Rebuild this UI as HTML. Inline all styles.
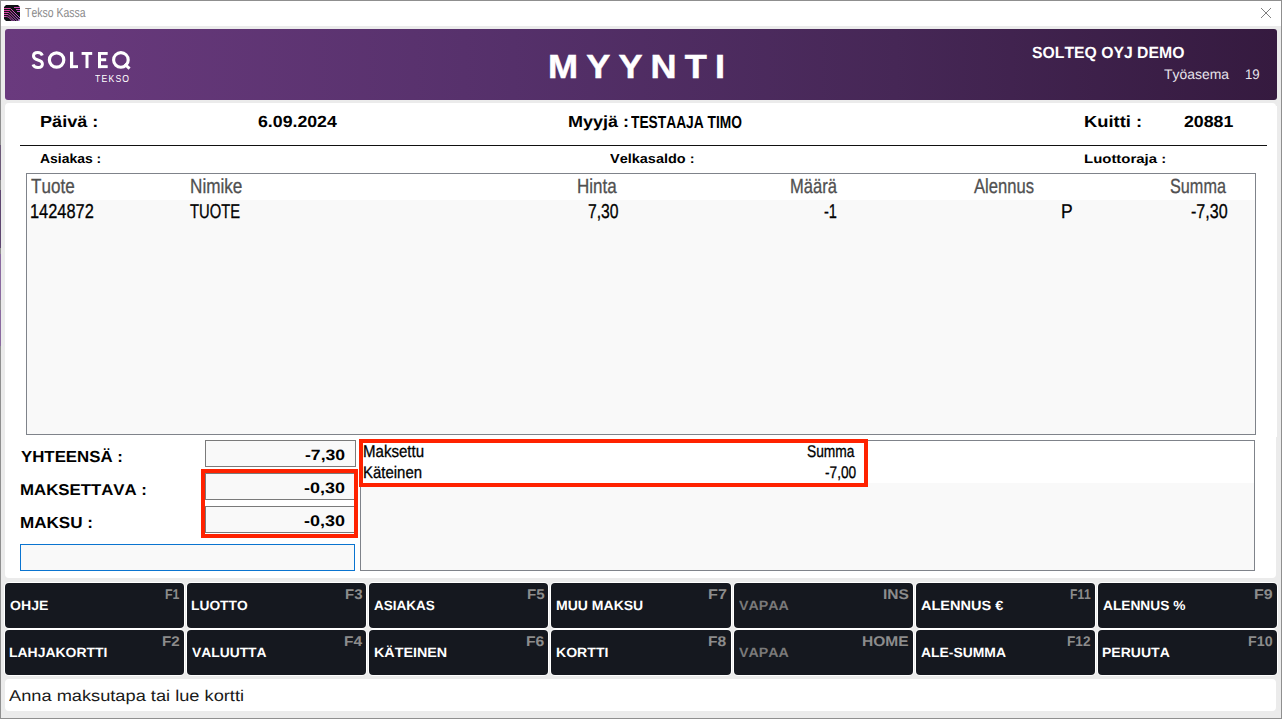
<!DOCTYPE html><html><head><meta charset="utf-8"><title>Tekso Kassa</title><style>

*{margin:0;padding:0;box-sizing:border-box}
html,body{width:1282px;height:719px;overflow:hidden}
body{position:relative;background:#ebebeb;font-family:"Liberation Sans",sans-serif;font-kerning:none}
.abs{position:absolute}
.t{position:absolute;white-space:pre;line-height:0;transform-origin:0 0;text-rendering:geometricPrecision}
.btn{position:absolute;background:#15181f;border-radius:4px;box-shadow:0 0 0 1px #ffffff}

</style></head><body>

<div class="abs" style="left:0;top:0;width:1282px;height:719px;border:1px solid #8f8f8f;border-right-width:1px"></div>
<div class="abs" style="left:1px;top:1px;width:1280px;height:25px;background:#ffffff"></div>
<div class="abs" style="left:0;top:145px;width:1px;height:35px;background:#6c5a78"></div>
<div class="abs" style="left:0;top:190px;width:1px;height:58px;background:#5e4670"></div>
<div class="abs" style="left:0;top:254px;width:1px;height:46px;background:#8a6aa0"></div>
<div class="abs" style="left:0;top:310px;width:1px;height:36px;background:#8a6aa0"></div>

<svg class="abs" style="left:4px;top:5px" width="16" height="16" viewBox="0 0 16 16">
  <defs><linearGradient id="pg" gradientUnits="userSpaceOnUse" x1="0" y1="2" x2="16" y2="16"><stop offset="0" stop-color="#ea3f96"/><stop offset="1" stop-color="#c466f2"/></linearGradient></defs>
  <path d="M2 0 H14 L16 2 V14 L14 16 H2 L0 14 V2 Z" fill="#101216"/>
  <g fill="none" stroke="url(#pg)" stroke-width="0.95">
   <path d="M0 3.5 H6.5 L19 16"/>
   <path d="M0 5.5 H5.7 L16.2 16"/>
   <path d="M0 7.5 H4.9 L13.4 16"/>
   <path d="M0 9.5 H4.1 L10.6 16"/>
   <path d="M0 11.5 H2 C4 11.5 5 12.5 8.5 16"/>
   <path d="M10 2.5 H16"/>
   <path d="M12 4.5 H16"/>
   <path d="M13 6.5 H16"/>
  </g>
</svg>
<div class="abs" style="left:1185px;top:44px;width:87px;height:16px;background:rgba(255,255,255,0.035)"></div>
<svg class="abs" style="left:1260px;top:7px" width="12" height="12" viewBox="0 0 12 12">
  <path d="M1 1 L11 11 M11 1 L1 11" stroke="#707070" stroke-width="0.9"/>
</svg>
<div class="abs" style="left:5px;top:29px;width:1272px;height:71px;border-radius:3px;background:linear-gradient(90deg,#6a3a7e 0%,#55306a 40%,#462756 70%,#351a3f 100%)"></div>
<div class="abs" style="left:5px;top:103px;width:1271px;height:475px;border-radius:4px;background:#ffffff"></div>
<div class="abs" style="left:1276px;top:106px;width:1px;height:331px;background:#ffffff"></div>
<div class="abs" style="left:20px;top:145px;width:1247px;height:1px;background:#111111"></div>
<div class="abs" style="left:26px;top:173px;width:1230px;height:262px;border:1px solid #7f838a;background:#f9f9f9"></div>
<div class="abs" style="left:27px;top:174px;width:1228px;height:26px;background:#ffffff"></div>
<div class="abs" style="left:205px;top:440px;width:151px;height:27px;border:1px solid #7a7a7a;background:#f9f9f9"></div>
<div class="abs" style="left:205px;top:473px;width:151px;height:27px;border:1px solid #7a7a7a;background:#f9f9f9"></div>
<div class="abs" style="left:205px;top:506px;width:151px;height:27px;border:1px solid #7a7a7a;background:#f9f9f9"></div>
<div class="abs" style="left:20px;top:544px;width:335px;height:27px;border:1px solid #0a74d0;background:#f9f9f9"></div>
<div class="abs" style="left:360px;top:440px;width:895px;height:131px;border:1px solid #7f838a;background:#f9f9f9"></div>
<div class="abs" style="left:361px;top:441px;width:893px;height:42px;background:#ffffff"></div>
<div class="abs" style="left:201px;top:469px;width:157px;height:69px;border:4px solid #ff2200"></div>
<div class="abs" style="left:359px;top:439px;width:509px;height:48px;border:4px solid #ff2200"></div>
<div class="abs" style="left:5px;top:679px;width:1271px;height:32px;border-radius:4px;background:#ffffff"></div>
<svg class="abs" style="left:0;top:0" width="140" height="90" viewBox="0 0 140 90">
  <g fill="none" stroke="#fff">
   <path d="M42.3 55.4 C41.6 53.5 39.9 52.5 37.8 52.5 C35.2 52.5 33.5 53.9 33.5 56.1 C33.5 58.6 35.7 59.4 37.9 60 C40.5 60.7 42.4 61.7 42.4 64 C42.4 66.4 40.4 67.5 37.9 67.5 C35.6 67.5 33.8 66.6 33.0 64.4" stroke-width="3"/>
   <circle cx="56.6" cy="60" r="7.2" stroke-width="3.2"/>
   <circle cx="120.9" cy="59.9" r="7.3" stroke-width="3.1"/>
   <path d="M124.6 64.2 L129.6 68.6" stroke-width="3"/>
  </g>
  <g fill="#fff">
   <rect x="70" y="51.8" width="3.2" height="16.3"/><rect x="70" y="65.2" width="8" height="2.9"/>
   <rect x="81.6" y="52" width="10.6" height="2.9"/><rect x="85.5" y="52" width="3" height="16.1"/>
   <rect x="98" y="52" width="3" height="16.1"/><rect x="98" y="52" width="9.7" height="2.9"/><rect x="98" y="58.3" width="8.2" height="2.9"/><rect x="98" y="65.2" width="9.7" height="2.9"/>
  </g>
</svg>
<div class="btn" style="left:5.00px;top:583px;width:179.14px;height:45px"></div><div class="btn" style="left:5.00px;top:630px;width:179.14px;height:45px"></div><div class="btn" style="left:187.14px;top:583px;width:179.14px;height:45px"></div><div class="btn" style="left:187.14px;top:630px;width:179.14px;height:45px"></div><div class="btn" style="left:369.29px;top:583px;width:179.14px;height:45px"></div><div class="btn" style="left:369.29px;top:630px;width:179.14px;height:45px"></div><div class="btn" style="left:551.43px;top:583px;width:179.14px;height:45px"></div><div class="btn" style="left:551.43px;top:630px;width:179.14px;height:45px"></div><div class="btn" style="left:733.57px;top:583px;width:179.14px;height:45px"></div><div class="btn" style="left:733.57px;top:630px;width:179.14px;height:45px"></div><div class="btn" style="left:915.71px;top:583px;width:179.14px;height:45px"></div><div class="btn" style="left:915.71px;top:630px;width:179.14px;height:45px"></div><div class="btn" style="left:1097.86px;top:583px;width:179.14px;height:45px"></div><div class="btn" style="left:1097.86px;top:630px;width:179.14px;height:45px"></div>
<div class="t" style="left:25.00px;top:13px;font-size:13.227px;color:#8a8a8a;transform:scaleX(0.7917);">Tekso Kassa</div><div class="t" style="left:95.34px;top:80px;font-size:10.175px;color:#ffffff;letter-spacing:1.413px;transform:scaleX(0.8500);">TEKSO</div><div class="t" style="left:547.65px;top:68px;font-size:33.431px;color:#ffffff;font-weight:bold;letter-spacing:7.524px;transform:scaleX(1.0800);-webkit-text-stroke:0.5px #fff;">MYYNTI</div><div class="t" style="left:1031.67px;top:53px;font-size:16.279px;color:#ffffff;font-weight:bold;transform:scaleX(0.9692);">SOLTEQ OYJ DEMO</div><div class="t" style="left:1164.00px;top:74px;font-size:13.954px;color:#e8e4ec;transform:scaleX(0.9983);">Työasema</div><div class="t" style="left:1244.66px;top:74px;font-size:13.954px;color:#e8e4ec;transform:scaleX(0.9490);">19</div><div class="t" style="left:39.81px;top:122px;font-size:16.134px;color:#000000;font-weight:bold;transform:scaleX(1.1233);">Päivä :</div><div class="t" style="left:257.92px;top:122px;font-size:16.134px;color:#000000;font-weight:bold;transform:scaleX(1.0986);">6.09.2024</div><div class="t" style="left:567.91px;top:122px;font-size:16.134px;color:#000000;font-weight:bold;transform:scaleX(1.1164);">Myyjä :</div><div class="t" style="left:631.15px;top:122px;font-size:17.442px;color:#000000;font-weight:bold;transform:scaleX(0.7897);">TESTAAJA TIMO</div><div class="t" style="left:1084.00px;top:122px;font-size:16.134px;color:#000000;font-weight:bold;transform:scaleX(1.1369);">Kuitti :</div><div class="t" style="left:1183.57px;top:122px;font-size:16.134px;color:#000000;font-weight:bold;transform:scaleX(1.0984);">20881</div><div class="t" style="left:40.12px;top:159px;font-size:13.082px;color:#000000;font-weight:bold;transform:scaleX(1.0662);">Asiakas :</div><div class="t" style="left:610.32px;top:159px;font-size:13.082px;color:#000000;font-weight:bold;transform:scaleX(1.1075);">Velkasaldo :</div><div class="t" style="left:1083.67px;top:159px;font-size:12.500px;color:#000000;font-weight:bold;transform:scaleX(1.1951);">Luottoraja :</div><div class="t" style="left:30.68px;top:187px;font-size:20.495px;color:#505050;transform:scaleX(0.8329);-webkit-text-stroke:0.3px #505050;">Tuote</div><div class="t" style="left:190.45px;top:187px;font-size:20.495px;color:#505050;transform:scaleX(0.8373);-webkit-text-stroke:0.3px #505050;">Nimike</div><div class="t" style="left:577.25px;top:187px;font-size:20.495px;color:#505050;transform:scaleX(0.8296);-webkit-text-stroke:0.3px #505050;">Hinta</div><div class="t" style="left:789.59px;top:187px;font-size:20.495px;color:#505050;transform:scaleX(0.8064);-webkit-text-stroke:0.3px #505050;">Määrä</div><div class="t" style="left:973.91px;top:187px;font-size:20.495px;color:#505050;transform:scaleX(0.8110);-webkit-text-stroke:0.3px #505050;">Alennus</div><div class="t" style="left:1170.45px;top:187px;font-size:20.495px;color:#505050;transform:scaleX(0.7924);-webkit-text-stroke:0.3px #505050;">Summa</div><div class="t" style="left:29.78px;top:212px;font-size:20.058px;color:#000000;transform:scaleX(0.8168);-webkit-text-stroke:0.3px #000000;">1424872</div><div class="t" style="left:189.66px;top:212px;font-size:20.058px;color:#000000;transform:scaleX(0.7362);-webkit-text-stroke:0.3px #000000;">TUOTE</div><div class="t" style="left:588.37px;top:212px;font-size:20.058px;color:#000000;transform:scaleX(0.7838);-webkit-text-stroke:0.3px #000000;">7,30</div><div class="t" style="left:823.74px;top:212px;font-size:20.058px;color:#000000;transform:scaleX(0.7271);-webkit-text-stroke:0.3px #000000;">-1</div><div class="t" style="left:1060.63px;top:212px;font-size:20.058px;color:#000000;transform:scaleX(0.8728);-webkit-text-stroke:0.3px #000000;">P</div><div class="t" style="left:1191.48px;top:212px;font-size:20.058px;color:#000000;transform:scaleX(0.8024);-webkit-text-stroke:0.3px #000000;">-7,30</div><div class="t" style="left:20.67px;top:458px;font-size:15.989px;color:#000000;font-weight:bold;transform:scaleX(1.0536);">YHTEENSÄ :</div><div class="t" style="left:20.48px;top:491px;font-size:15.698px;color:#000000;font-weight:bold;transform:scaleX(1.0711);">MAKSETTAVA :</div><div class="t" style="left:20.48px;top:523px;font-size:16.134px;color:#000000;font-weight:bold;transform:scaleX(1.0581);">MAKSU :</div><div class="t" style="left:304.71px;top:456px;font-size:14.971px;color:#000000;font-weight:bold;transform:scaleX(1.1755);">-7,30</div><div class="t" style="left:303.79px;top:489px;font-size:15.117px;color:#000000;font-weight:bold;transform:scaleX(1.1898);">-0,30</div><div class="t" style="left:303.78px;top:522px;font-size:15.262px;color:#000000;font-weight:bold;transform:scaleX(1.1785);">-0,30</div><div class="t" style="left:363.30px;top:452px;font-size:17.006px;color:#000000;transform:scaleX(0.8857);-webkit-text-stroke:0.3px #000000;">Maksettu</div><div class="t" style="left:806.61px;top:452px;font-size:17.006px;color:#000000;transform:scaleX(0.8113);-webkit-text-stroke:0.3px #000000;">Summa</div><div class="t" style="left:363.30px;top:473px;font-size:16.861px;color:#000000;transform:scaleX(0.8871);-webkit-text-stroke:0.3px #000000;">Käteinen</div><div class="t" style="left:824.57px;top:473px;font-size:16.861px;color:#000000;transform:scaleX(0.8111);-webkit-text-stroke:0.3px #000000;">-7,00</div><div class="t" style="left:8.65px;top:697px;font-size:15.698px;color:#1a1a1a;transform:scaleX(1.1618);">Anna maksutapa tai lue kortti</div><div class="t" style="left:9.77px;top:606px;font-size:13.372px;color:#ffffff;font-weight:bold;transform:scaleX(1.0550);">OHJE</div><div class="t" style="left:9.31px;top:653px;font-size:13.372px;color:#ffffff;font-weight:bold;transform:scaleX(1.0447);">LAHJAKORTTI</div><div class="t" style="left:165.35px;top:594px;font-size:14.099px;color:#8c8c8c;font-weight:bold;transform:scaleX(0.8827);">F1</div><div class="t" style="left:162.32px;top:641px;font-size:14.099px;color:#8c8c8c;font-weight:bold;transform:scaleX(1.0779);">F2</div><div class="t" style="left:191.45px;top:606px;font-size:13.372px;color:#ffffff;font-weight:bold;transform:scaleX(1.0324);">LUOTTO</div><div class="t" style="left:192.12px;top:653px;font-size:13.372px;color:#ffffff;font-weight:bold;transform:scaleX(1.0358);">VALUUTTA</div><div class="t" style="left:344.56px;top:594px;font-size:14.099px;color:#8c8c8c;font-weight:bold;transform:scaleX(1.0627);">F3</div><div class="t" style="left:343.73px;top:641px;font-size:14.099px;color:#8c8c8c;font-weight:bold;transform:scaleX(1.1013);">F4</div><div class="t" style="left:374.16px;top:606px;font-size:13.372px;color:#ffffff;font-weight:bold;transform:scaleX(1.0115);">ASIAKAS</div><div class="t" style="left:373.57px;top:653px;font-size:13.372px;color:#ffffff;font-weight:bold;transform:scaleX(1.0709);">KÄTEINEN</div><div class="t" style="left:526.68px;top:594px;font-size:14.099px;color:#8c8c8c;font-weight:bold;transform:scaleX(1.0776);">F5</div><div class="t" style="left:526.06px;top:641px;font-size:14.099px;color:#8c8c8c;font-weight:bold;transform:scaleX(1.1150);">F6</div><div class="t" style="left:555.74px;top:606px;font-size:13.372px;color:#ffffff;font-weight:bold;transform:scaleX(1.0496);">MUU MAKSU</div><div class="t" style="left:555.73px;top:653px;font-size:13.372px;color:#ffffff;font-weight:bold;transform:scaleX(1.0540);">KORTTI</div><div class="t" style="left:707.87px;top:594px;font-size:14.099px;color:#8c8c8c;font-weight:bold;transform:scaleX(1.1500);">F7</div><div class="t" style="left:708.21px;top:641px;font-size:14.099px;color:#8c8c8c;font-weight:bold;transform:scaleX(1.1073);">F8</div><div class="t" style="left:738.53px;top:606px;font-size:13.372px;color:#7a7a7a;font-weight:bold;transform:scaleX(1.0651);">VAPAA</div><div class="t" style="left:738.53px;top:653px;font-size:13.372px;color:#7a7a7a;font-weight:bold;transform:scaleX(1.0651);">VAPAA</div><div class="t" style="left:882.94px;top:594px;font-size:14.099px;color:#8c8c8c;font-weight:bold;transform:scaleX(1.1042);">INS</div><div class="t" style="left:862.15px;top:641px;font-size:14.099px;color:#8c8c8c;font-weight:bold;transform:scaleX(1.1031);">HOME</div><div class="t" style="left:920.54px;top:606px;font-size:13.372px;color:#ffffff;font-weight:bold;transform:scaleX(1.0870);">ALENNUS €</div><div class="t" style="left:920.54px;top:653px;font-size:13.372px;color:#ffffff;font-weight:bold;transform:scaleX(1.0402);">ALE-SUMMA</div><div class="t" style="left:1069.79px;top:594px;font-size:14.099px;color:#8c8c8c;font-weight:bold;transform:scaleX(0.8578);">F11</div><div class="t" style="left:1067.42px;top:641px;font-size:14.099px;color:#8c8c8c;font-weight:bold;transform:scaleX(0.9668);">F12</div><div class="t" style="left:1102.69px;top:606px;font-size:13.372px;color:#ffffff;font-weight:bold;transform:scaleX(1.0277);">ALENNUS %</div><div class="t" style="left:1102.16px;top:653px;font-size:13.372px;color:#ffffff;font-weight:bold;transform:scaleX(1.0492);">PERUUTA</div><div class="t" style="left:1254.22px;top:594px;font-size:14.099px;color:#8c8c8c;font-weight:bold;transform:scaleX(1.1343);">F9</div><div class="t" style="left:1248.40px;top:641px;font-size:14.099px;color:#8c8c8c;font-weight:bold;transform:scaleX(1.0140);">F10</div>
</body></html>
